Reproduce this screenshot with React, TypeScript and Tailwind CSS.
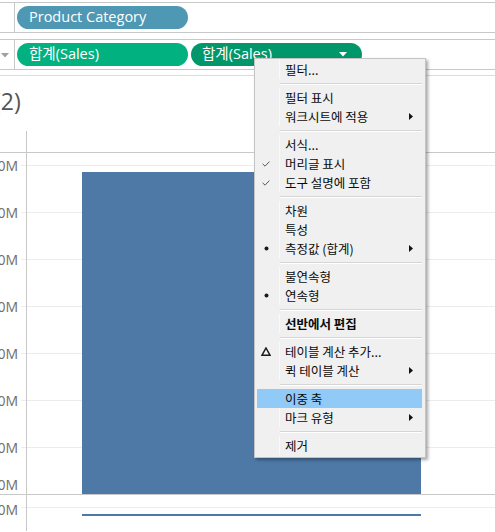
import React from 'react';

const KR = "'Noto Sans CJK KR', 'Noto Sans', sans-serif";
const UI = "'Open Sans', 'Noto Sans CJK KR', sans-serif";

type Item =
  | { label: string; icon?: 'check' | 'dot' | 'delta'; sub?: boolean; bold?: boolean; hl?: boolean }
  | 'sep';

const items: Item[] = [
  { label: '필터...' },
  'sep',
  { label: '필터 표시' },
  { label: '워크시트에 적용', sub: true },
  'sep',
  { label: '서식...' },
  { label: '머리글 표시', icon: 'check' },
  { label: '도구 설명에 포함', icon: 'check' },
  'sep',
  { label: '차원' },
  { label: '특성' },
  { label: '측정값 (합계)', icon: 'dot', sub: true },
  'sep',
  { label: '불연속형' },
  { label: '연속형', icon: 'dot' },
  'sep',
  { label: '선반에서 편집', bold: true },
  'sep',
  { label: '테이블 계산 추가...', icon: 'delta' },
  { label: '퀵 테이블 계산', sub: true },
  'sep',
  { label: '이중 축', hl: true },
  { label: '마크 유형', sub: true },
  'sep',
  { label: '제거' },
];

function Icon({ kind }: { kind?: 'check' | 'dot' | 'delta' }) {
  if (kind === 'check')
    return (
      <svg width="8" height="6" viewBox="0 0 8 6">
        <path d="M0.6 2.8 L3 5.2 L7.4 0.6" fill="none" stroke="#5a5a5a" strokeWidth="1" />
      </svg>
    );
  if (kind === 'dot')
    return (
      <svg width="5" height="5" viewBox="0 0 5 5">
        <circle cx="2.5" cy="2.5" r="2" fill="#1a1a1a" />
      </svg>
    );
  if (kind === 'delta')
    return (
      <svg width="10" height="9" viewBox="0 0 10 9">
        <path d="M5 1 L9 8.2 L1 8.2 Z" fill="none" stroke="#1a1a1a" strokeWidth="1.5" strokeLinejoin="miter" />
      </svg>
    );
  return null;
}

function Menu() {
  return (
    <div
      className="absolute left-[254px] top-[58px] z-10 w-[172px] border border-[#c4c4c4] bg-[#f0f0f0] pt-[1px] pb-[2px] pl-[2px] pr-[3px] shadow-[2px_2px_3px_rgba(0,0,0,0.35)]"
      style={{ fontFamily: KR }}
    >
      {items.map((it, i) =>
        it === 'sep' ? (
          <div key={i} className="flex h-[9px] flex-col justify-center pl-[23px]">
            <div className="h-px bg-[#d5d5d5]" />
            <div className="h-px bg-white" />
          </div>
        ) : (
          <div
            key={i}
            className={`flex h-[19px] items-center text-[12.5px] text-[#0a0a0a] ${it.hl ? 'bg-[#91c9f7]' : ''}`}
          >
            <div className="flex h-full w-[22px] items-center justify-center pr-[4px]">
              <Icon kind={it.icon} />
            </div>
            <div className={`h-full w-px ${it.hl ? '' : 'bg-[#fafafa]'}`} />
            <div className={`flex-1 pl-[5px] leading-[19px] ${it.bold ? 'font-bold' : ''}`}>{it.label}</div>
            {it.sub && (
              <svg width="4" height="7" viewBox="0 0 4 7" className="mr-[9px]">
                <path d="M0 0 L4 3.5 L0 7 Z" fill="#111" />
              </svg>
            )}
          </div>
        )
      )}
    </div>
  );
}

function Pill({
  color,
  label,
  pl,
  arrow,
}: {
  color: string;
  label: string;
  pl: string;
  arrow?: boolean;
}) {
  return (
    <div
      className={`flex h-[23px] w-[171px] items-center justify-between rounded-full ${color} ${pl} pr-[15px] text-[14.5px] text-white`}
      style={{ fontFamily: UI }}
    >
      <span className="leading-none">{label}</span>
      {arrow && (
        <svg width="8" height="5" viewBox="0 0 8 5">
          <path d="M0 0 L8 0 L4 4.5 Z" fill="#fff" />
        </svg>
      )}
    </div>
  );
}

const grid = [34, 81, 128, 175, 222, 269, 316];
const labels = [34, 81, 128, 175, 222, 269, 316, 353, 378];

export default function App() {
  return (
    <div className="relative h-[532px] w-[495px] overflow-hidden bg-white" style={{ fontFamily: UI }}>
      {/* shelves */}
      <div className="pt-[2px]">
        <div className="flex h-[31px] border-y border-[#c8c8c8]">
          <div className="w-[15px] border-r border-[#c8c8c8]" />
          <div className="pl-[2px] pt-[3px]">
            <Pill color="bg-[#4e98b4]" label="Product Category" pl="pl-[12px]" />
          </div>
        </div>
        <div className="h-[6px]" />
        <div className="flex h-[31px] border-y border-[#c8c8c8]">
          <div className="flex w-[15px] items-center border-r border-[#c8c8c8] pl-[1px] pt-[1px]">
            <svg width="8" height="5" viewBox="0 0 8 5">
              <path d="M0 0 L8 0 L4 4.5 Z" fill="#a0a0a0" />
            </svg>
          </div>
          <div className="flex gap-[3px] pl-[2px] pt-[3px]">
            <Pill color="bg-[#02b180]" label="합계(Sales)" pl="pl-[12px]" />
            <Pill color="bg-[#02976a]" label="합계(Sales)" pl="pl-[11px]" arrow />
          </div>
        </div>
        <div className="h-[6px] border-b border-[#dcdcdc]" />
      </div>

      {/* title */}
      <div className="h-[55px] pt-[11px]">
        <div className="ml-[-6px] text-[23px] leading-[28px] text-[#555]">(2)</div>
      </div>

      {/* chart */}
      <svg width="495" height="400" className="block">
        {grid.map((y) => (
          <line key={y} x1="21" x2="495" y1={y + 0.5} y2={y + 0.5} stroke="#ececec" />
        ))}
        <line x1="21" x2="495" y1={376.5} y2={376.5} stroke="#ececec" />
        <line x1="0" x2="495" y1="21.5" y2="21.5" stroke="#c8c8c8" />
        <rect x="82" y="41" width="339" height="322" fill="#4e79a7" />
        <line x1="0" x2="495" y1="363.5" y2="363.5" stroke="#c8c8c8" />
        <rect x="82" y="383" width="339" height="2" fill="#4e79a7" />
        <line x1="26.5" x2="26.5" y1="0" y2="400" stroke="#c8c8c8" />
        {labels.map((y) => (
          <text
            key={y}
            x="18"
            y={y}
            textAnchor="end"
            dominantBaseline="central"
            fontSize="14"
            fill="#6e6e6e"
            style={{ fontFamily: UI }}
          >
            0M
          </text>
        ))}
      </svg>

      <Menu />
    </div>
  );
}
